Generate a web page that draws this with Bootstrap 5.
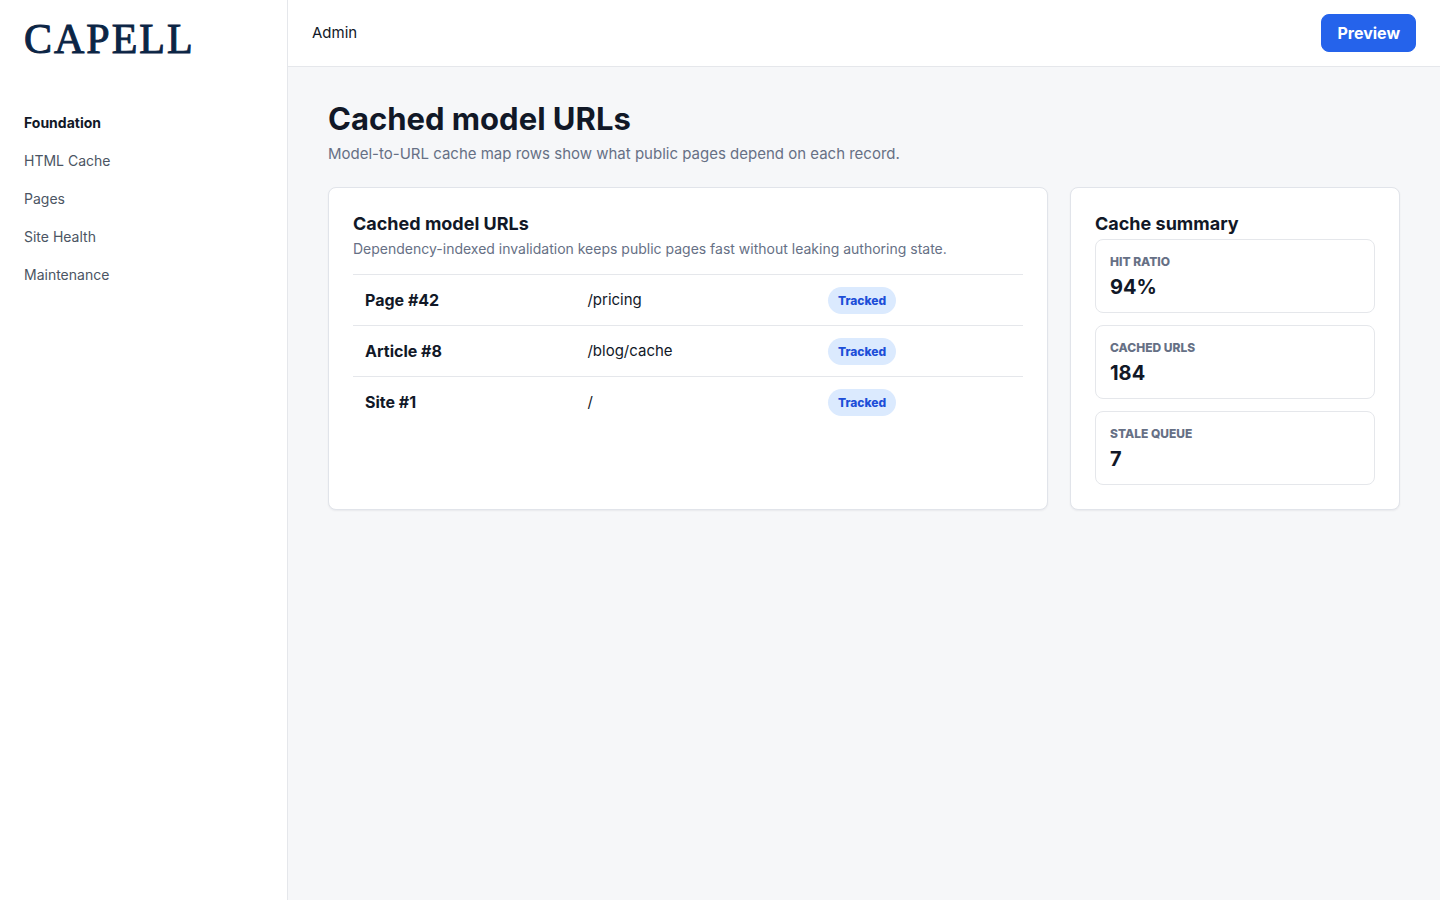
<!DOCTYPE html>
<html lang="en">
<head>
<meta charset="utf-8">
<meta name="viewport" content="width=device-width, initial-scale=1">
<title>Cached model URLs</title>
<link rel="stylesheet" href="https://cdn.jsdelivr.net/npm/bootstrap@5.3.0/dist/css/bootstrap.min.css">
<style>
  body { font-family: Inter, "Liberation Sans", sans-serif; font-size: 15px; line-height: 24px; color: #111827; background: #f6f7f9; }
  h1, h2 { color: #111827; }
  .sidebar { width: 288px; border-right: 1px solid #e5e7eb; padding: 16px 24px; }
  .brand { font-family: "Liberation Serif", serif; height: 88px; }
  .brand svg { display: block; width: 180px; height: 48px; }
  .side-link { display: block; font-size: 14px; line-height: 22px; padding: 8px 0; color: #4b5563; text-decoration: none; }
  .side-link.current { color: #111827; font-weight: 700; }
  .topbar { height: 67px; border-bottom: 1px solid #e5e7eb; }
  .preview-btn { font-size: 16px; font-weight: 700; line-height: 24px; padding: 6px 15px; border-radius: 8px; --bs-btn-bg: #2563eb; --bs-btn-border-color: #2563eb; }
  .content { padding: 32px 40px; }
  .page-title { font-size: 31px; line-height: 40px; font-weight: 700; }
  .page-note { line-height: 22px; }
  .muted { color: #667085; }
  .panels { display: grid; grid-template-columns: minmax(0, 1fr) 330px; gap: 22px; margin-top: 22px; }
  .panel { border: 1px solid #e1e4ea; border-radius: 8px; padding: 24px; box-shadow: 0 1px 2px rgba(16, 24, 40, .06); }
  .panel-title { font-size: 18px; line-height: 23px; font-weight: 700; }
  .panel-note { font-size: 14px; line-height: 19px; }
  .map-table { color: #111827; }
  .map-table tr { border-top: 1px solid #e5e7eb; }
  .map-table th, .map-table td { padding: 8px 12px; height: 51px; vertical-align: middle; }
  .map-table th { font-size: 16px; }
  .pill { font-size: 12px; line-height: 19px; font-weight: 800; padding: 4px 10px; color: #1d4ed8; background: #dbeafe; vertical-align: middle; }
  .stats { gap: 12px; }
  .stat { border: 1px solid #e5e7eb; border-radius: 8px; padding: 12px 14px 10px; }
  .stat-name { font-size: 12px; line-height: 20px; font-weight: 800; }
  .stat-value { font-size: 20px; line-height: 30px; font-weight: 700; }
</style>
</head>
<body>
<div class="d-flex min-vh-100">
  <aside class="sidebar bg-white flex-shrink-0">
    <div class="brand">
      <svg role="img" aria-label="Capell"><text x="0" y="37" font-size="42" letter-spacing="2" fill="#0b2545" stroke="#0b2545" stroke-width="1">CAPELL</text></svg>
    </div>
    <nav aria-label="Main">
      <a class="side-link current" href="#">Foundation</a>
      <a class="side-link" href="#">HTML Cache</a>
      <a class="side-link" href="#">Pages</a>
      <a class="side-link" href="#">Site Health</a>
      <a class="side-link" href="#">Maintenance</a>
    </nav>
  </aside>
  <div class="flex-grow-1">
    <header class="topbar bg-white d-flex align-items-center justify-content-between px-4">
      <span>Admin</span>
      <button type="button" class="btn btn-primary preview-btn">Preview</button>
    </header>
    <main class="content">
      <h1 class="page-title mb-1">Cached model URLs</h1>
      <p class="page-note muted mb-0">Model-to-URL cache map rows show what public pages depend on each record.</p>
      <div class="panels">
        <section class="panel bg-white">
          <h2 class="panel-title mb-1">Cached model URLs</h2>
          <p class="panel-note muted mb-3">Dependency-indexed invalidation keeps public pages fast without leaking authoring state.</p>
          <table class="map-table w-100">
            <colgroup><col style="width:33.2%"><col style="width:35.9%"><col></colgroup>
            <tbody>
              <tr><th scope="row">Page #42</th><td>/pricing</td><td><span class="pill rounded-pill d-inline-block">Tracked</span></td></tr>
              <tr><th scope="row">Article #8</th><td>/blog/cache</td><td><span class="pill rounded-pill d-inline-block">Tracked</span></td></tr>
              <tr><th scope="row">Site #1</th><td>/</td><td><span class="pill rounded-pill d-inline-block">Tracked</span></td></tr>
            </tbody>
          </table>
        </section>
        <section class="panel bg-white">
          <h2 class="panel-title mb-1">Cache summary</h2>
          <div class="d-grid stats">
            <div class="stat"><div class="stat-name muted text-uppercase">Hit ratio</div><div class="stat-value">94%</div></div>
            <div class="stat"><div class="stat-name muted text-uppercase">Cached URLs</div><div class="stat-value">184</div></div>
            <div class="stat"><div class="stat-name muted text-uppercase">Stale queue</div><div class="stat-value">7</div></div>
          </div>
        </section>
      </div>
    </main>
  </div>
</div>
<script src="https://cdn.jsdelivr.net/npm/bootstrap@5.3.0/dist/js/bootstrap.bundle.min.js"></script>
</body>
</html>
